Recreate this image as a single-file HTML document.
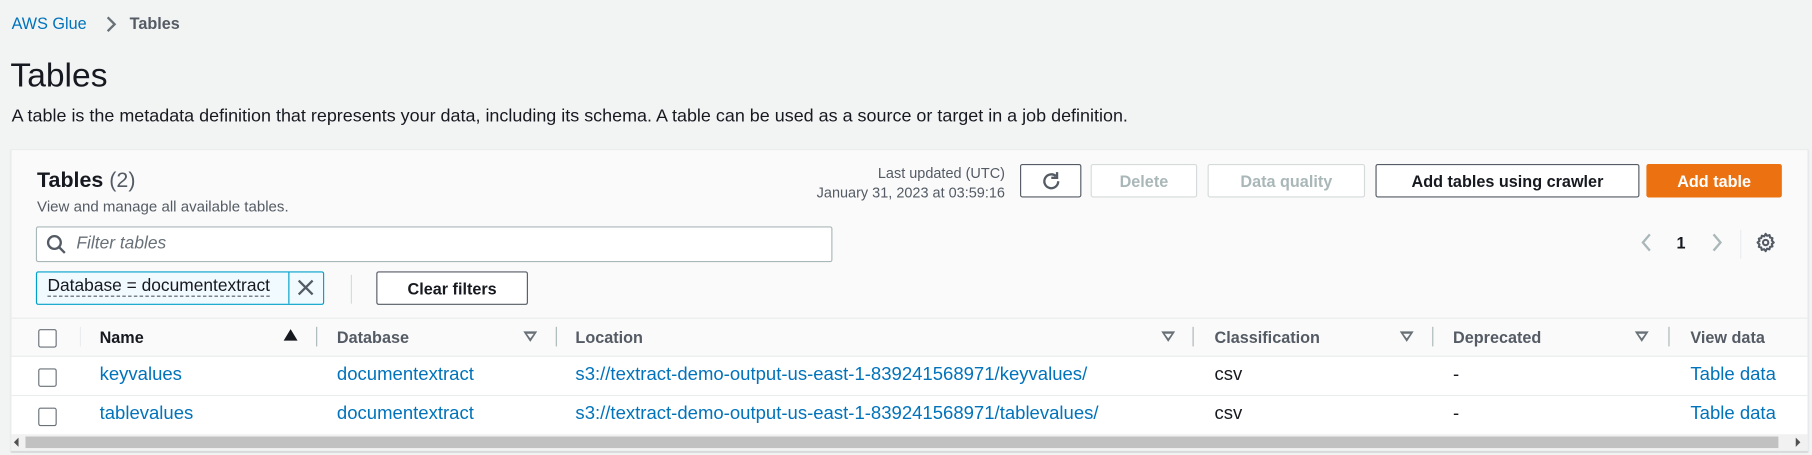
<!DOCTYPE html>
<html><head><meta charset="utf-8"><style>
html,body{margin:0;padding:0;width:1812px;height:455px;overflow:hidden;background:#f2f3f3;}
#w{position:absolute;left:0;top:0;width:1565px;height:394px;transform:scale(1.1578,1.1548);transform-origin:0 0;font-family:"Liberation Sans",sans-serif;color:#16191f;}
.a{position:absolute;white-space:nowrap;}
.lk{color:#0073bb;}
.box{position:absolute;box-sizing:border-box;}
.btn{position:absolute;box-sizing:border-box;border:1px solid #545b64;border-radius:2px;background:#fff;font-weight:bold;font-size:14px;color:#545b64;display:flex;align-items:center;justify-content:center;}
.dis{border-color:#d5dbdb;color:#aab7b8;}
.hd{position:absolute;top:284px;font-weight:bold;font-size:14px;color:#545b64;}
.tri{position:absolute;top:287px;width:0;height:0;border-left:6px solid transparent;border-right:6px solid transparent;border-top:9px solid #687078;}
.tri:after{content:"";position:absolute;left:-3px;top:-7px;border-left:3px solid transparent;border-right:3px solid transparent;border-top:4px solid #fafafa;}
.dv{position:absolute;top:283px;width:1px;height:17px;background:#aab7b8;}
.cb{position:absolute;left:33px;width:14px;height:14px;border:1px solid #687078;border-radius:2px;background:#fff;}
.r{position:absolute;font-size:16px;}
</style></head><body><div id="w">
<div class="a lk" style="left:10px;top:12px;font-size:14px">AWS Glue</div>
<svg class="a" style="left:91px;top:14px" width="10" height="14" viewBox="0 0 10 14"><path d="M2 1l6 6-6 6" fill="none" stroke="#687078" stroke-width="2"/></svg>
<div class="a" style="left:112px;top:12px;font-size:14px;font-weight:bold;color:#545b64">Tables</div>
<div class="a" style="left:9px;top:50px;font-size:29px;color:#16191f">Tables</div>
<div class="a" style="left:10px;top:92px;font-size:15.5px;color:#16191f">A table is the metadata definition that represents your data, including its schema. A table can be used as a source or target in a job definition.</div>

<div class="box" style="left:9px;top:129px;width:1553px;height:262px;background:#fafafa;border:1px solid #eaeded;box-shadow:0 1px 1px rgba(0,28,36,.3)"></div>
<div class="box" style="left:10px;top:309px;width:1551px;height:67px;background:#fff"></div>
<div class="box" style="left:10px;top:275px;width:1551px;height:1px;background:#eaeded"></div>
<div class="box" style="left:10px;top:308px;width:1551px;height:1px;background:#eaeded"></div>
<div class="box" style="left:10px;top:342px;width:1551px;height:1px;background:#eaeded"></div>

<div class="a" style="left:32px;top:145px;font-size:18.5px;font-weight:bold">Tables <span style="font-weight:normal;color:#545b64">(2)</span></div>
<div class="a" style="left:32px;top:171px;font-size:13px;color:#545b64">View and manage all available tables.</div>
<div class="a" style="left:660px;top:142px;width:208px;text-align:right;font-size:12.5px;color:#545b64;line-height:17px">Last updated (UTC)<br>January 31, 2023 at 03:59:16</div>

<div class="btn" style="left:881px;top:142px;width:53px;height:29px"><svg width="18" height="18" viewBox="0 0 18 18"><path d="M15 9a6 6 0 1 1-2-4.5" fill="none" stroke="#545b64" stroke-width="2"/><path d="M14 1v5h-5" fill="none" stroke="#545b64" stroke-width="2"/></svg></div>
<div class="btn dis" style="left:942px;top:142px;width:92px;height:29px">Delete</div>
<div class="btn dis" style="left:1043px;top:142px;width:136px;height:29px">Data quality</div>
<div class="btn" style="left:1188px;top:142px;width:228px;height:29px;color:#16191f">Add tables using crawler</div>
<div class="btn" style="left:1422px;top:142px;width:117px;height:29px;background:#ec7211;border-color:#ec7211;color:#fff">Add table</div>

<div class="box" style="left:31px;top:196px;width:688px;height:31px;background:#fff;border:1px solid #aab7b8;border-radius:2px"></div>
<svg class="a" style="left:40px;top:203px" width="17" height="17" viewBox="0 0 17 17"><circle cx="7" cy="7" r="5.5" fill="none" stroke="#545b64" stroke-width="2"/><path d="M11 11l5 5" stroke="#545b64" stroke-width="2"/></svg>
<div class="a" style="left:66px;top:202px;font-size:15px;font-style:italic;color:#687078">Filter tables</div>

<div class="box" style="left:31px;top:235px;width:249px;height:29px;background:#f1faff;border:1px solid #00a1c9;border-radius:2px"></div>
<div class="box" style="left:249px;top:236px;width:1px;height:27px;background:#00a1c9"></div>
<div class="a" style="left:41px;top:240px;font-size:15px;border-bottom:1px dashed #545b64;line-height:16px">Database = documentextract</div>
<svg class="a" style="left:257px;top:242px" width="14" height="14" viewBox="0 0 14 14"><path d="M1 1l12 12M13 1L1 13" stroke="#545b64" stroke-width="2"/></svg>
<div class="box" style="left:303px;top:238px;width:1px;height:25px;background:#d5dbdb"></div>
<div class="btn" style="left:325px;top:235px;width:131px;height:29px;color:#16191f">Clear filters</div>

<svg class="a" style="left:1416px;top:201px" width="12" height="18" viewBox="0 0 12 18"><path d="M9 2L3 9l6 7" fill="none" stroke="#aab7b8" stroke-width="2"/></svg>
<div class="a" style="left:1448px;top:202px;font-size:14px;font-weight:bold">1</div>
<svg class="a" style="left:1477px;top:201px" width="12" height="18" viewBox="0 0 12 18"><path d="M3 2l6 7-6 7" fill="none" stroke="#aab7b8" stroke-width="2"/></svg>
<div class="box" style="left:1503px;top:199px;width:1px;height:25px;background:#eaeded"></div>
<svg class="a" style="left:1516px;top:201px" width="18" height="18" viewBox="0 0 18 18"><path d="M9 1.5l1.3 1.7 2.1-.6.4 2.1 2.1.5-.6 2.1L16 9l-1.7 1.3.6 2.1-2.1.4-.5 2.1-2.1-.6L9 16.5l-1.3-1.7-2.1.6-.4-2.1-2.1-.5.6-2.1L2 9l1.7-1.3-.6-2.1 2.1-.4.5-2.1 2.1.6z" fill="none" stroke="#545b64" stroke-width="1.8" stroke-linejoin="round"/><circle cx="9" cy="9" r="2.3" fill="none" stroke="#545b64" stroke-width="1.8"/></svg>

<div class="cb" style="top:285px"></div>
<div class="box" style="left:69px;top:283px;width:1px;height:17px;background:#eaeded"></div>
<div class="hd" style="left:86px;color:#16191f">Name</div>
<div class="a" style="left:245px;top:285px;width:0;height:0;border-left:6px solid transparent;border-right:6px solid transparent;border-bottom:10px solid #16191f"></div>
<div class="dv" style="left:273px"></div>
<div class="hd" style="left:291px">Database</div><div class="tri" style="left:452px"></div><div class="dv" style="left:480px"></div>
<div class="hd" style="left:497px">Location</div><div class="tri" style="left:1003px"></div><div class="dv" style="left:1030px"></div>
<div class="hd" style="left:1049px">Classification</div><div class="tri" style="left:1209px"></div><div class="dv" style="left:1237px"></div>
<div class="hd" style="left:1255px">Deprecated</div><div class="tri" style="left:1412px"></div><div class="dv" style="left:1441px"></div>
<div class="hd" style="left:1460px">View data</div>

<div class="cb" style="top:319px"></div>
<div class="r lk" style="left:86px;top:316px">keyvalues</div>
<div class="r lk" style="left:291px;top:316px">documentextract</div>
<div class="r lk" style="left:497px;top:316px">s3://textract-demo-output-us-east-1-839241568971/keyvalues/</div>
<div class="r" style="left:1049px;top:316px">csv</div>
<div class="r" style="left:1255px;top:316px">-</div>
<div class="r lk" style="left:1460px;top:316px">Table data</div>

<div class="cb" style="top:353px"></div>
<div class="r lk" style="left:86px;top:350px">tablevalues</div>
<div class="r lk" style="left:291px;top:350px">documentextract</div>
<div class="r lk" style="left:497px;top:350px">s3://textract-demo-output-us-east-1-839241568971/tablevalues/</div>
<div class="r" style="left:1049px;top:350px">csv</div>
<div class="r" style="left:1255px;top:350px">-</div>
<div class="r lk" style="left:1460px;top:350px">Table data</div>

<div class="box" style="left:10px;top:376px;width:1551px;height:14px;background:#f1f1f1"></div>
<div class="box" style="left:22px;top:378px;width:1514px;height:10px;background:#c1c1c1"></div>
<div class="a" style="left:12px;top:379px;border-top:4px solid transparent;border-bottom:4px solid transparent;border-right:4px solid #505050"></div>
<div class="a" style="left:1551px;top:379px;border-top:4px solid transparent;border-bottom:4px solid transparent;border-left:4px solid #505050"></div>
</div></body></html>
